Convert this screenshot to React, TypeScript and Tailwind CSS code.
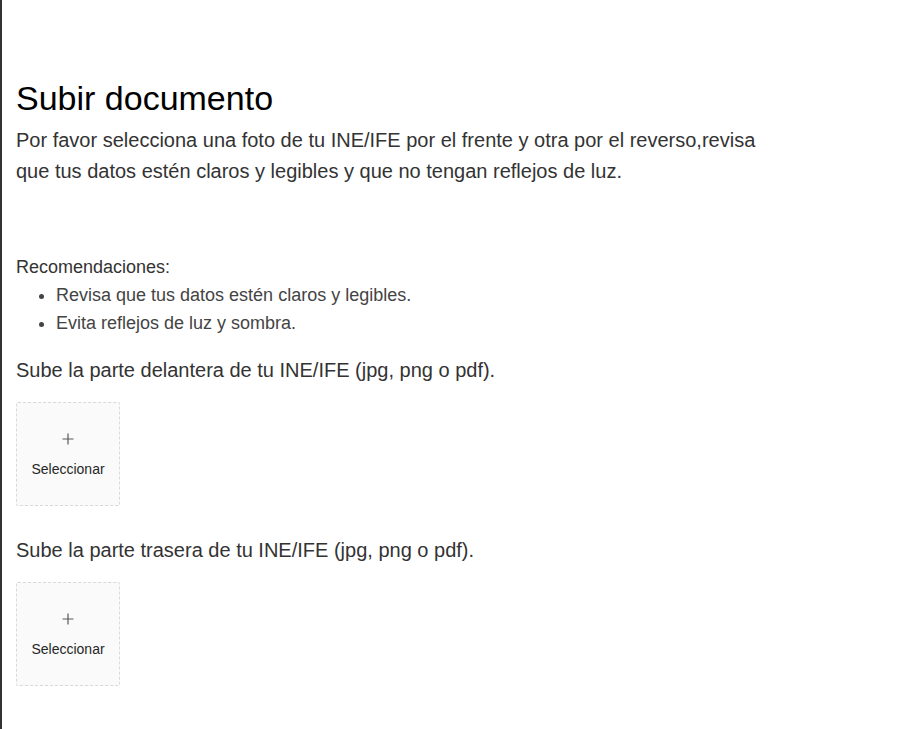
import React from "react";

const recomendaciones = [
  "Revisa que tus datos estén claros y legibles.",
  "Evita reflejos de luz y sombra.",
];

const PlusIcon = () => (
  <svg width="12" height="12" viewBox="0 0 12 12" className="text-[#595959]">
    <path d="M6 0.5v11M0.5 6h11" stroke="currentColor" strokeWidth="1.2" fill="none" />
  </svg>
);

const UploadBox = () => (
  <button
    type="button"
    className="w-[104px] h-[104px] border border-dashed border-[#d9d9d9] bg-[#fafafa] rounded-[2px] flex flex-col items-center justify-center gap-[13px] pt-[4px] cursor-pointer"
  >
    <PlusIcon />
    <span className="text-[14px] leading-[22px] text-[#262626]">Seleccionar</span>
  </button>
);

export default function App() {
  return (
    <div
      className="min-h-[729px] bg-white border-l-2 border-[#333] pl-[14px] pt-[79px] pb-10 text-[#333]"
      style={{ fontFamily: '"Liberation Sans", Arial, sans-serif' }}
    >
      <h1 className="text-[34px] leading-[38px] text-black font-normal">Subir documento</h1>
      <p className="mt-[8px] max-w-[750px] text-[20px] leading-[31px]">
        Por favor selecciona una foto de tu INE/IFE por el frente y otra por el reverso,revisa
        que tus datos estén claros y legibles y que no tengan reflejos de luz.
      </p>

      <div className="mt-[66px] text-[18px] leading-[28px]">
        <p>Recomendaciones:</p>
        <ul className="list-disc pl-10 text-[#444]">
          {recomendaciones.map((r, i) => (
            <li key={i}>{r}</li>
          ))}
        </ul>
      </div>

      <p className="mt-[19px] text-[20px] leading-[28px]">
        Sube la parte delantera de tu INE/IFE (jpg, png o pdf).
      </p>
      <div className="mt-[18px]">
        <UploadBox />
      </div>

      <p className="mt-[30px] text-[20px] leading-[28px]">
        Sube la parte trasera de tu INE/IFE (jpg, png o pdf).
      </p>
      <div className="mt-[18px]">
        <UploadBox />
      </div>
    </div>
  );
}
